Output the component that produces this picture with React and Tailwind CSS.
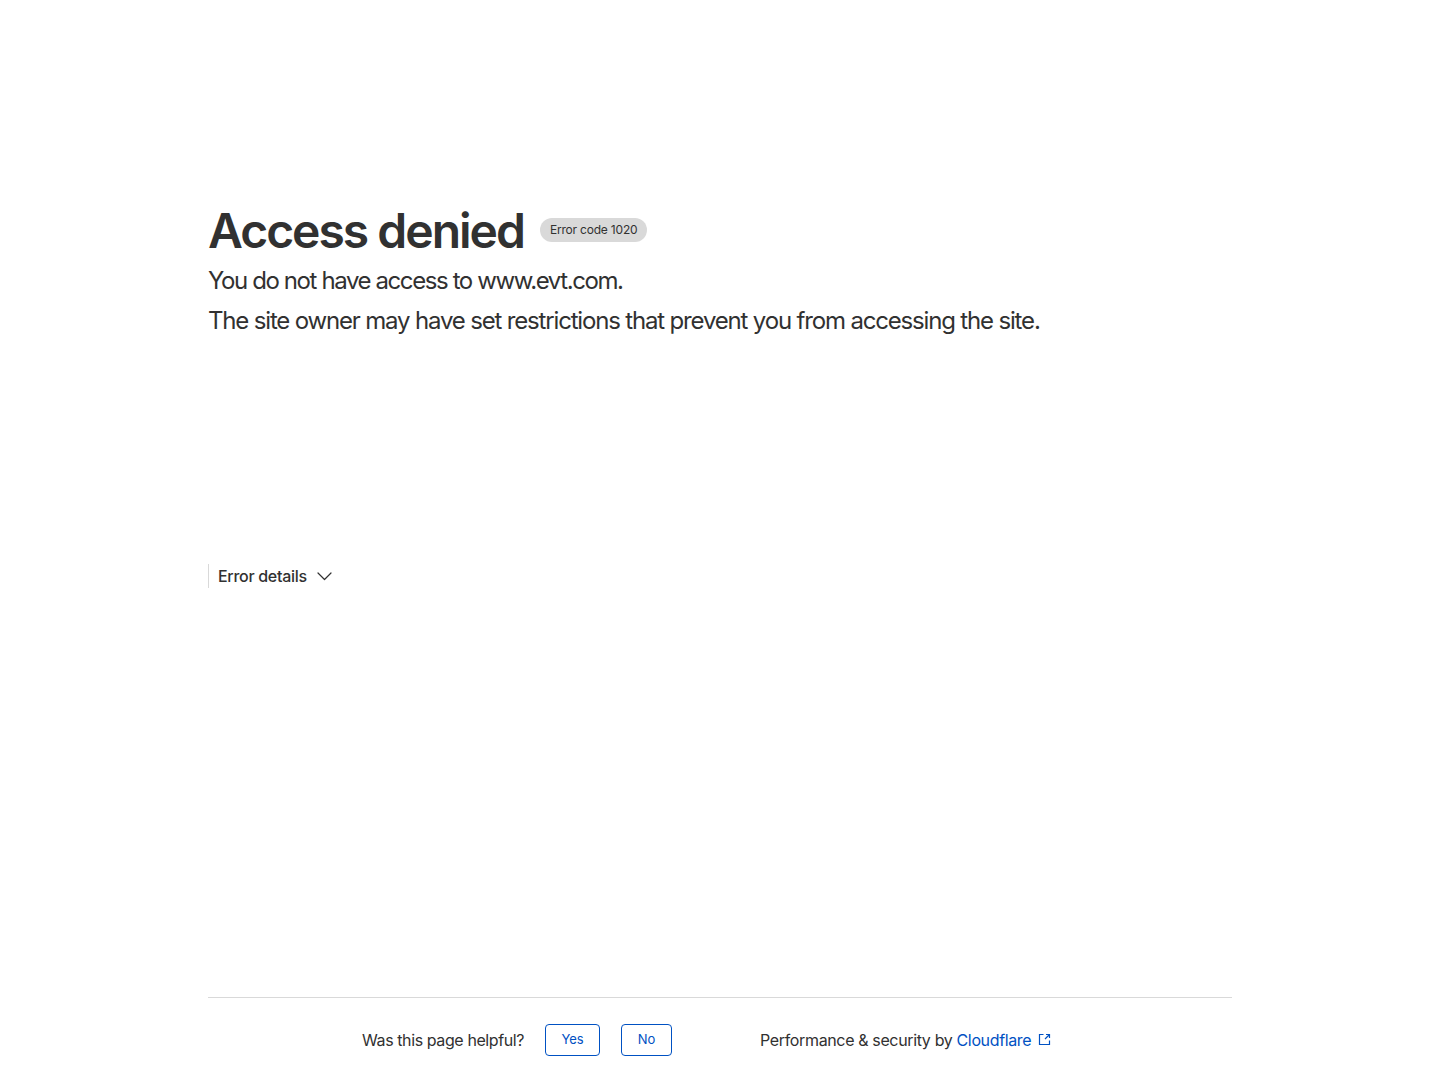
export default function App() {
  return (
    <div className="min-h-[1080px] bg-white text-[#313131] flex flex-col" style={{ fontFamily: 'Inter, "Noto Sans", sans-serif' }}>
      <div className="w-[1024px] mx-auto flex-1 flex flex-col">
        {/* Heading */}
        <div className="pt-[203px] flex items-center gap-[16px]">
          <h1 className="text-[48px] leading-[56px] font-semibold tracking-[-2px]">Access denied</h1>
          <span className="mt-[-3px] bg-[#d9d9d9] rounded-full px-[10px] h-6 flex items-center text-[12px] tracking-[-0.2px] text-[#313131]">
            Error code 1020
          </span>
        </div>
        <p className="mt-[8px] text-[24px] leading-[28px] tracking-[-1.4px]">You do not have access to www.evt.com.</p>
        <p className="mt-[12px] text-[24px] leading-[28px] tracking-[-1.17px]">
          The site owner may have set restrictions that prevent you from accessing the site.
        </p>

        {/* Error details */}
        <div className="mt-[229px] border-l border-[#d9d9d9] pl-[9px] flex items-center gap-[10px] h-6 w-fit">
          <span className="text-[16px] font-medium tracking-[-0.3px]">Error details</span>
          <svg width="15" height="9" viewBox="0 0 15 9" fill="none" stroke="#313131" strokeWidth="1.2" strokeLinecap="round" strokeLinejoin="round">
            <polyline points="1,1 7.5,7.5 14,1" />
          </svg>
        </div>

        <div className="flex-1" />

        {/* Footer */}
        <div className="border-t border-[#d9d9d9] mb-[24px]">
          <div className="pt-[26px] pl-[154px] flex items-center">
            <span className="text-[16px] tracking-[-0.4px]">Was this page helpful?</span>
            <button className="ml-[21px] w-[55px] h-[32px] border border-[#0051c3] rounded text-[#0051c3] text-[13px]">
              Yes
            </button>
            <button className="ml-[21px] w-[51px] h-[32px] border border-[#0051c3] rounded text-[#0051c3] text-[13px]">
              No
            </button>
            <span className="ml-[88px] text-[16px] tracking-[-0.36px]">
              Performance &amp; security by{' '}
              <span className="text-[#0051c3]">Cloudflare</span>
            </span>
            <svg width="13" height="13" viewBox="0 0 13 13" fill="none" stroke="#0051c3" strokeWidth="1.2" className="ml-[7px] mt-[-2px]">
              <path d="M5.5 1.5H1.5V11.5H11.5V7.5" />
              <path d="M7 6L11.5 1.5M8 1.5H11.5V5" />
            </svg>
          </div>
        </div>
      </div>
    </div>
  );
}
